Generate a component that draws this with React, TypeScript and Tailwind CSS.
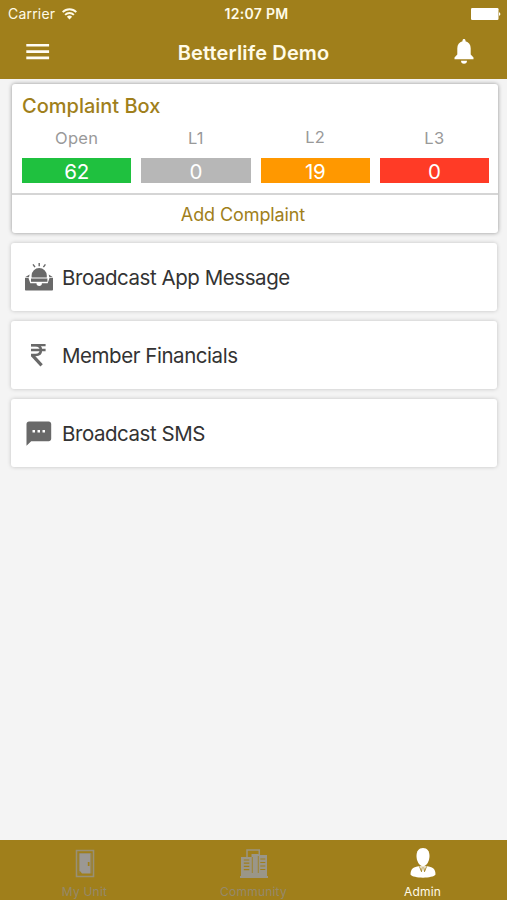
import { clsx } from 'clsx'
import type { ReactNode } from 'react'

interface LevelProps {
  label: string
  count: number
  color: string
  labelClass?: string
}

const levels: LevelProps[] = [
  { label: 'Open', count: 62, color: 'bg-[#1fc13f]' },
  { label: 'L1', count: 0, color: 'bg-[#b7b7b7]' },
  { label: 'L2', count: 19, color: 'bg-[#ff9800]', labelClass: 'pb-[2px] leading-[22px]' },
  { label: 'L3', count: 0, color: 'bg-[#ff3b26]' },
]

function WifiIcon() {
  return (
    <svg className="w-[15px] h-[12px]" viewBox="0 0 15 12" fill="none" stroke="#fffbe8" strokeWidth="1.9">
      <path d="M.7 4.100a9.600 9.600 0 0 1 13.600 0M3.100 6.900a6.200 6.200 0 0 1 8.800 0" />
      <path d="M7.500 11.400 4.900 8.800a3.700 3.700 0 0 1 5.200 0z" fill="#fffbe8" stroke="none" />
    </svg>
  )
}

function BatteryIcon() {
  return (
    <svg className="w-[30px] h-[12px]" viewBox="0 0 30 12" fill="#fff">
      <rect width="27.500" height="12" rx="1.200" />
      <path d="M28 4.200c1.800.3 1.800 3.300 0 3.600z" />
    </svg>
  )
}

function MenuIcon() {
  return (
    <svg className="w-[24px] h-[16px]" viewBox="0 0 24 16" fill="#fffdf5">
      <path d="M.3 0h22.800v2.600H.3zM.3 6.300h22.800v2.600H.3zM.3 12.600h22.800v2.600H.3z" />
    </svg>
  )
}

function BellIcon() {
  return (
    <svg className="w-[20px] h-[25px]" viewBox="0 0 20 25" fill="#fff">
      <path d="M10 0c.9 0 1.500.7 1.500 1.500v.8c3.300.8 5.200 3.500 5.200 7v6.200l2.800 3v1.700H.5v-1.700l2.800-3V9.300c0-3.500 1.900-6.200 5.200-7v-.8C8.500.7 9.100 0 10 0z" />
      <path d="M7 21.700h6a3 3 0 0 1-6 0z" />
    </svg>
  )
}

function SirenIcon() {
  return (
    <svg className="w-[28px] h-[28px]" viewBox="0 0 28 28" fill="#696969">
      <path d="M14.200 5a7.600 7.600 0 0 1 7.600 7.600v1.900H6.600v-1.900A7.600 7.600 0 0 1 14.200 5z" />
      <path d="M0 15h3.500l1.800 5.200h6.200a2.700 2.700 0 0 0 5.400 0h5.800l1.800-5.200H28v11.600c0 .6-.5 1-1 1H1c-.6 0-1-.4-1-1z" />
      <path d="M6 15.500h16.400v3.300H6z" />
      <path d="M4.600 11.500 0 14.300h4zM23.700 11.500l4.300 2.800h-3.700z" />
      <path d="M14.200 0v3.200M8 1.300l2 2.900M20.400 1.300l-2 2.900" stroke="#696969" strokeWidth="1.400" />
    </svg>
  )
}

function RupeeIcon() {
  return (
    <svg className="w-[28px] h-[24px]" viewBox="0 0 28 24" fill="none" stroke="#696969">
      <path d="M6 2.200h14.600M6 7h14.600" strokeWidth="2.300" />
      <path d="M6 2.200h4.600c3.500 0 5.300 1.700 5.300 4.900s-1.900 4.900-5.300 4.900H6" strokeWidth="2.600" />
      <path d="M7.200 12.200 16.600 22.300" strokeWidth="3.200" />
    </svg>
  )
}

function SmsIcon() {
  return (
    <svg className="w-[28px] h-[25px]" viewBox="0 0 28 25">
      <path d="M4 .5h19.700c1.400 0 2.500 1.100 2.500 2.500v14.800c0 1.400-1.100 2.500-2.500 2.500H6.200L1.500 24.800V3C1.500 1.600 2.600.5 4 .5z" fill="#696969" />
      <path d="M7.500 9h2.500v2.500H7.500zM12.500 9h2.500v2.500h-2.500zM17.500 9h2.500v2.500h-2.500z" fill="#fff" />
    </svg>
  )
}

function DoorIcon() {
  return (
    <svg className="w-[20px] h-[29px]" viewBox="0 0 20 29">
      <path d="M1.500 27.500V1.500h17v26z" fill="none" stroke="#989076" strokeWidth="1.600" />
      <path d="M4.200 24.500V4.500h12v20" fill="none" stroke="#918557" strokeWidth="1" />
      <path d="M4.500 4.500h11v20H7l-2.500-3z" fill="#9b9894" />
      <path d="M12.800 13h1.700v4h-1.700z" fill="#a07f1b" />
    </svg>
  )
}

function BuildingsIcon() {
  return (
    <svg className="w-[28px] h-[29px]" viewBox="0 0 28 29">
      <path d="M7 8.500V.9h12.300v5.600" fill="none" stroke="#9b9580" strokeWidth="1.500" />
      <path d="M1 8h10.500v-3h7.300V6H27v21h1v2H0v-2h1z" fill="#9a9688" />
      <path
        d="M3.800 11h5.500M3.800 14.200h5.500M3.800 17.400h5.500M3.800 20.600h5.500M20.300 10h5M20.300 13.500h5M20.300 17h5M20.300 20.500h5"
        stroke="#a07f1b"
        strokeWidth="1.200"
      />
      <path d="M12.300 8v16M18.300 7v17" stroke="#a07f1b" strokeWidth=".8" />
    </svg>
  )
}

function AdminIcon() {
  return (
    <svg className="w-[26px] h-[30px]" viewBox="0 0 26 30">
      <path d="M.5 26.500c0-6.200 3.500-7.400 8.500-8.200h8c5 .8 8.500 2 8.500 8.200-2.500 4.200-22.500 4.200-25 0z" fill="#fff" />
      <path d="M13 0c4.300 0 6.500 3.200 6.500 8S16.800 18.300 13 18.300 6.500 12.800 6.500 8 8.700 0 13 0z" fill="#fff" />
      <path d="m9.500 18.500 2 5.200.7-4.500M16.500 18.500l-2 5.200-.7-4.500" fill="none" stroke="#a07f1b" strokeWidth=".9" />
    </svg>
  )
}

function Level({ label, count, color, labelClass }: LevelProps) {
  return (
    <div className="flex-1 text-center">
      <div className={clsx('h-[24px] text-[16.5px] tracking-[0.3px] text-[#999]', labelClass ?? 'leading-[24px]')}>
        {label}
      </div>
      <div className={clsx('mt-[8px] h-[25px] text-[20.5px] leading-[27px] tracking-[-0.3px] text-white', color)}>{count}</div>
    </div>
  )
}

function MenuRow({ icon, label }: { icon: ReactNode; label: string }) {
  return (
    <button className="flex h-[68px] w-full items-center rounded-[3px] bg-white pl-[14px] text-left shadow-[0_0_4px_rgba(0,0,0,0.2)]">
      {icon}
      <span className="ml-[9px] pt-[2px] text-[20.5px] tracking-[-0.45px] text-[#333]">{label}</span>
    </button>
  )
}

function Tab({ icon, label, active = false }: { icon: ReactNode; label: string; active?: boolean }) {
  return (
    <button
      className={clsx(
        'flex flex-1 flex-col items-center pt-[8px] text-[12px] tracking-[0.2px]',
        active ? 'text-[#fffbe8]' : 'text-[#95896a]',
      )}
    >
      <span className="flex h-[30px] items-center">{icon}</span>
      <span className="mt-[6px] leading-[16px]">{label}</span>
    </button>
  )
}

export default function App() {
  return (
    <div className="flex h-[900px] w-[507px] flex-col overflow-hidden bg-[#f4f4f4] font-['Inter',sans-serif]">
      <header className="h-[79px] bg-[#a07f1b] text-[#fffbe8]">
        {/* Status bar */}
        <div className="grid h-[27px] grid-cols-3 items-center pl-[8px] pr-[6px] text-[14px]">
          <span className="flex items-center gap-[7px] tracking-[0.2px]">
            Carrier
            <WifiIcon />
          </span>
          <span className="pl-[4px] text-center font-semibold tracking-[0.3px]">12:07 PM</span>
          <span className="flex justify-end">
            <BatteryIcon />
          </span>
        </div>
        <div className="flex h-[49px] items-center justify-between pl-[26px] pr-[33px]">
          <MenuIcon />
          <h1 className="pl-[3px] pt-[2px] text-[20px] font-semibold tracking-[0.15px]">Betterlife Demo</h1>
          <BellIcon />
        </div>
      </header>

      <main className="flex flex-1 flex-col gap-[10px] pl-[11px] pr-[10px] pt-[5px]">
        <section className="-mr-px ml-px h-[149px] rounded-[3px] bg-white shadow-[0_0_4px_rgba(0,0,0,0.4)]">
          <div className="h-[109px] px-[10px] pr-[9px] pt-[8px]">
            <h2 className="pt-px text-[20px] font-medium leading-[27px] text-[#a07f1b]">Complaint Box</h2>
            <div className="mt-[6px] flex gap-[10px]">
              {levels.map((level) => (
                <Level key={level.label} {...level} />
              ))}
            </div>
          </div>
          <button className="h-[40px] w-full border-t-2 border-[#d5d5d5] pr-[24px] pt-px text-[18px] tracking-[-0.1px] text-[#a07f1b]">
            Add Complaint
          </button>
        </section>

        <MenuRow icon={<SirenIcon />} label="Broadcast App Message" />
        <MenuRow icon={<RupeeIcon />} label="Member Financials" />
        <MenuRow icon={<SmsIcon />} label="Broadcast SMS" />
      </main>

      <nav className="flex h-[60px] bg-[#a07f1b]">
        <Tab icon={<DoorIcon />} label="My Unit" />
        <Tab icon={<BuildingsIcon />} label="Community" />
        <Tab icon={<AdminIcon />} label="Admin" active />
      </nav>
    </div>
  )
}
